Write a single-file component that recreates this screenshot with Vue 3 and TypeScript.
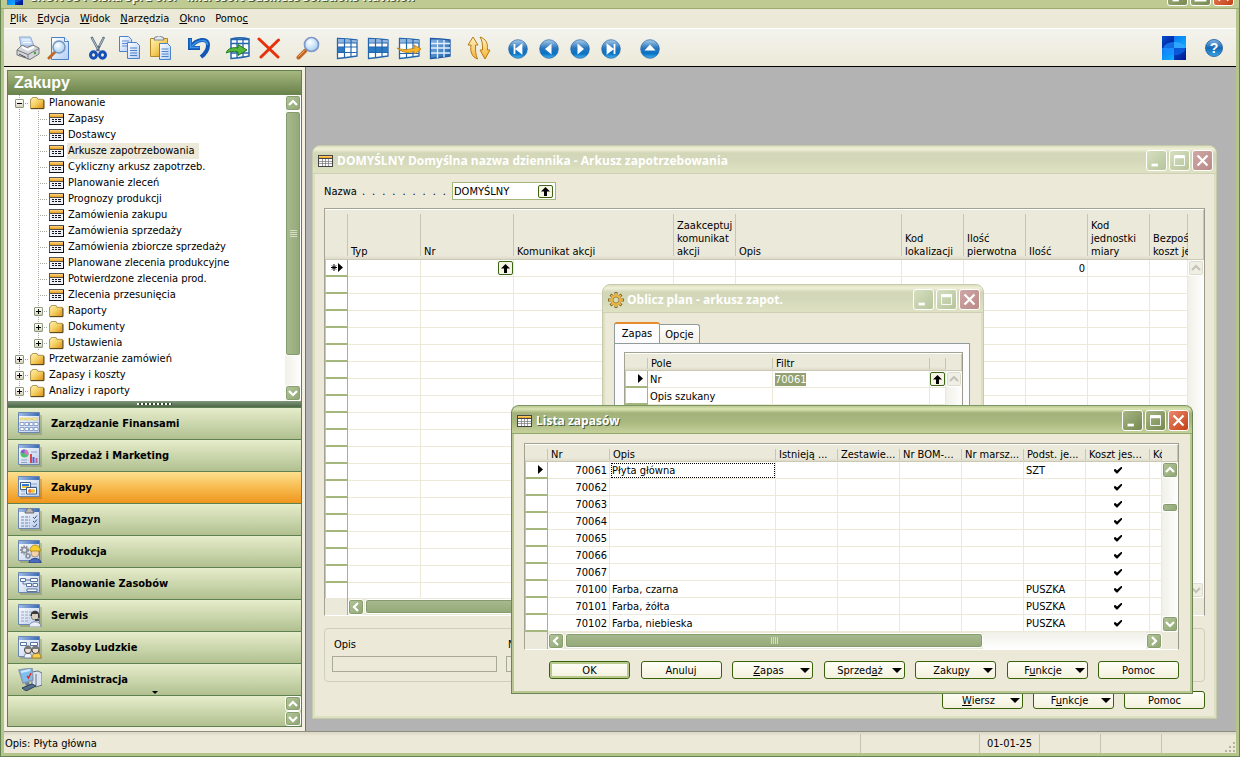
<script setup lang="ts">
interface TreeRow {
  level: 1 | 2
  label: string
  kind: 'folder' | 'list'
  state?: 'open' | 'closed'
  selected?: boolean
}

interface Item {
  nr: string
  name: string
  unit: string
}

const menus: string[] = ['&Plik', '&Edycja', '&Widok', '&Narzędzia', '&Okno', 'Pomo&c']

const toolGroups: { id: string; title: string }[][] = [
  [{ id: 'print', title: 'Drukuj' }, { id: 'preview', title: 'Podgląd' }],
  [{ id: 'cut', title: 'Wytnij' }, { id: 'copy', title: 'Kopiuj' }, { id: 'paste', title: 'Wklej' }],
  [{ id: 'undo', title: 'Cofnij' }],
  [{ id: 'insert', title: 'Wstaw' }, { id: 'delete', title: 'Usuń' }],
  [{ id: 'find', title: 'Znajdź' }],
  [{ id: 'grid1', title: 'Filtr pola' }, { id: 'grid2', title: 'Filtr tabeli' }, { id: 'grid3', title: 'Filtr przepływu' }, { id: 'grid4', title: 'Pokaż wszystko' }],
  [{ id: 'refresh', title: 'Odśwież' }],
  [{ id: 'first', title: 'Pierwszy' }, { id: 'prev', title: 'Poprzedni' }, { id: 'next', title: 'Następny' }, { id: 'last', title: 'Ostatni' }],
  [{ id: 'up', title: 'Lista' }],
]

const list = (label: string, selected = false): TreeRow => ({ level: 2, label, kind: 'list', selected })

const tree: TreeRow[] = [
  { level: 1, label: 'Planowanie', kind: 'folder', state: 'open' },
  list('Zapasy'),
  list('Dostawcy'),
  list('Arkusze zapotrzebowania', true),
  list('Cykliczny arkusz zapotrzeb.'),
  list('Planowanie zleceń'),
  list('Prognozy produkcji'),
  list('Zamówienia zakupu'),
  list('Zamówienia sprzedaży'),
  list('Zamówienia zbiorcze sprzedaży'),
  list('Planowane zlecenia produkcyjne'),
  list('Potwierdzone zlecenia prod.'),
  list('Zlecenia przesunięcia'),
  { level: 2, label: 'Raporty', kind: 'folder', state: 'closed' },
  { level: 2, label: 'Dokumenty', kind: 'folder', state: 'closed' },
  { level: 2, label: 'Ustawienia', kind: 'folder', state: 'closed' },
  { level: 1, label: 'Przetwarzanie zamówień', kind: 'folder', state: 'closed' },
  { level: 1, label: 'Zapasy i koszty', kind: 'folder', state: 'closed' },
  { level: 1, label: 'Analizy i raporty', kind: 'folder', state: 'closed' },
]

const modules: { id: string; label: string }[] = [
  { id: 'finance', label: 'Zarządzanie Finansami' },
  { id: 'sales', label: 'Sprzedaż i Marketing' },
  { id: 'purchase', label: 'Zakupy' },
  { id: 'warehouse', label: 'Magazyn' },
  { id: 'production', label: 'Produkcja' },
  { id: 'resources', label: 'Planowanie Zasobów' },
  { id: 'service', label: 'Serwis' },
  { id: 'hr', label: 'Zasoby Ludzkie' },
  { id: 'admin', label: 'Administracja' },
]
const activeModule = 'purchase'

const sheetColumns: { label: string; cls: string }[] = [
  { label: 'Typ', cls: 'w73' },
  { label: 'Nr', cls: 'w93' },
  { label: 'Komunikat akcji', cls: 'w160' },
  { label: 'Zaakceptuj\nkomunikat\nakcji', cls: 'w62' },
  { label: 'Opis', cls: 'w166' },
  { label: 'Kod\nlokalizacji', cls: 'w62' },
  { label: 'Ilość\npierwotna', cls: 'w62' },
  { label: 'Ilość', cls: 'w62' },
  { label: 'Kod\njednostki\nmiary', cls: 'w62' },
  { label: 'Bezpoś\nkoszt je', cls: 'rest' },
]
const sheetRows = 20

const itemColumns: { label: string; cls: string }[] = [
  { label: 'Nr', cls: 'w62' },
  { label: 'Opis', cls: 'w166' },
  { label: 'Istnieją ...', cls: 'w62' },
  { label: 'Zestawie...', cls: 'w62' },
  { label: 'Nr BOM-...', cls: 'w62' },
  { label: 'Nr marsz...', cls: 'w62' },
  { label: 'Podst. je...', cls: 'w62' },
  { label: 'Koszt jes...', cls: 'w64' },
  { label: 'Ko', cls: 'rest' },
]

const items: Item[] = [
  { nr: '70061', name: 'Płyta główna', unit: 'SZT' },
  { nr: '70062', name: '', unit: '' },
  { nr: '70063', name: '', unit: '' },
  { nr: '70064', name: '', unit: '' },
  { nr: '70065', name: '', unit: '' },
  { nr: '70066', name: '', unit: '' },
  { nr: '70067', name: '', unit: '' },
  { nr: '70100', name: 'Farba, czarna', unit: 'PUSZKA' },
  { nr: '70101', name: 'Farba, żółta', unit: 'PUSZKA' },
  { nr: '70102', name: 'Farba, niebieska', unit: 'PUSZKA' },
]

const itemActions: { label: string; menu?: boolean; primary?: boolean }[] = [
  { label: 'OK', primary: true },
  { label: 'Anuluj' },
  { label: '&Zapas', menu: true },
  { label: 'Sprzed&aż', menu: true },
  { label: 'Zaku&py', menu: true },
  { label: 'F&unkcje', menu: true },
  { label: 'Pomoc' },
]

const sheetActions: { label: string; menu?: boolean }[] = [
  { label: '&Wiersz', menu: true },
  { label: 'F&unkcje', menu: true },
  { label: 'Pomoc' },
]

/** Splits "F&unkcje" into text before, the accelerator key, and text after. */
function accel(label: string): [string, string, string] {
  const i = label.indexOf('&')
  return i < 0 ? [label, '', ''] : [label.slice(0, i), label[i + 1], label.slice(i + 2)]
}
</script>

<template>
  <svg class="defs" aria-hidden="true">
    <defs>
      <linearGradient id="gPage" x1="0" y1="0" x2="1" y2="1"><stop offset="0" stop-color="#fff" /><stop offset="1" stop-color="#b4cdf6" /></linearGradient>
      <linearGradient id="gFolder" x1="0" y1="0" x2="1" y2="1"><stop offset="0" stop-color="#fff3b8" /><stop offset=".5" stop-color="#f5cf60" /><stop offset="1" stop-color="#dd8a10" /></linearGradient>
      <linearGradient id="gBlue" x1="0" y1="0" x2="0" y2="1"><stop offset="0" stop-color="#a9cdea" /><stop offset=".45" stop-color="#2a76bd" /><stop offset=".75" stop-color="#0873c4" /><stop offset="1" stop-color="#4db4ee" /></linearGradient>
      <linearGradient id="gGrid" x1="0" y1="0" x2="1" y2="1"><stop offset="0" stop-color="#8db6e2" /><stop offset="1" stop-color="#1a62b0" /></linearGradient>
      <linearGradient id="gGold" x1="0" y1="0" x2="0" y2="1"><stop offset="0" stop-color="#fff6cc" /><stop offset="1" stop-color="#f5b02c" /></linearGradient>
      <linearGradient id="gBar" x1="0" y1="0" x2="0" y2="1"><stop offset="0" stop-color="#ffd98a" /><stop offset="1" stop-color="#ee9a10" /></linearGradient>
      <radialGradient id="gLens" cx=".4" cy=".35" r=".7"><stop offset="0" stop-color="#fff" /><stop offset="1" stop-color="#9ecbf2" /></radialGradient>
      <linearGradient id="gModTop" x1="0" y1="0" x2="1" y2="0"><stop offset="0" stop-color="#9dbbe6" /><stop offset="1" stop-color="#3f6cb4" /></linearGradient>
      <linearGradient id="gModPage" x1="0" y1="0" x2="1" y2="1"><stop offset="0" stop-color="#fff" /><stop offset="1" stop-color="#b9ccec" /></linearGradient>
      <linearGradient id="gNavy" x1="0" y1="0" x2="1" y2="1"><stop offset="0" stop-color="#0050d0" /><stop offset="1" stop-color="#00148c" /></linearGradient>
      <linearGradient id="gSky" x1="0" y1="0" x2="1" y2="1"><stop offset="0" stop-color="#0a78f0" /><stop offset="1" stop-color="#0cb0ff" /></linearGradient>
    </defs>

    <symbol id="t-print" viewBox="0 0 24 24">
      <path d="M3.500 1h11l3.500 9H5z" fill="#c4dcfa" stroke="#8fa9cc" /><path d="M6 4h8M7 6.500h8" stroke="#fff" />
      <path d="M1 14l5-5 5 2.500 6-2.500 6 3v6l-9 5.500L1 19z" fill="#d4d5d8" stroke="#777b82" />
      <path d="M1 14l11 4.500 11-6M12 18.500v5" fill="none" stroke="#777b82" /><path d="M6 11l6 3 6-3" fill="none" stroke="#fff" stroke-width="2" />
      <path d="M3 18l7 3.500" stroke="#444" /><path d="M18 17.500l2-1" stroke="#3aa53a" stroke-width="2" />
    </symbol>
    <symbol id="t-preview" viewBox="0 0 24 24">
      <path d="M4.500 1.500h13l4 4v18h-17z" fill="url(#gPage)" stroke="#4b82c8" /><path d="M17.500 1.500v4h4" fill="#fff" stroke="#4b82c8" />
      <path d="M8 16l-6 6" stroke="#c0682a" stroke-width="3" stroke-linecap="round" /><circle cx="12" cy="11" r="6" fill="url(#gLens)" stroke="#7695bb" stroke-width="1.500" />
    </symbol>
    <symbol id="t-cut" viewBox="0 0 24 24">
      <path d="M5.500 1l7.500 14M18 1l-7 14" stroke="#5a6b80" stroke-width="2.400" /><path d="M6 2l6 11M17.500 2l-4 8" stroke="#c9d5e2" stroke-width=".8" />
      <ellipse cx="7.500" cy="19" rx="3" ry="3.200" fill="none" stroke="#1450b8" stroke-width="3" /><ellipse cx="16.500" cy="19" rx="3" ry="3.200" fill="none" stroke="#1450b8" stroke-width="3" />
    </symbol>
    <symbol id="t-copy" viewBox="0 0 24 24">
      <path d="M2.500 .5h9l3 3v12h-12z" fill="url(#gPage)" stroke="#4b82c8" /><path d="M5 5h7M5 7.500h7M5 10h7" stroke="#5b90d8" />
      <path d="M10.500 6.500h9l3 3v13h-12z" fill="url(#gPage)" stroke="#4b82c8" /><path d="M13 12h7M13 14.500h7M13 17h7M13 19.500h7" stroke="#4b82c8" />
    </symbol>
    <symbol id="t-paste" viewBox="0 0 24 24">
      <path d="M2.500 2.500h17v18h-17z" fill="url(#gFolder)" stroke="#b28a28" /><path d="M6 4l1-3h2c0-1.500 4-1.500 4 0h2l1 3z" fill="#e7e9ee" stroke="#7c8794" />
      <path d="M11.500 7.500h8l3 3v13h-11z" fill="url(#gPage)" stroke="#4b82c8" /><path d="M13.500 13h7M13.500 15.500h7M13.500 18h7M13.500 20.500h7" stroke="#4b82c8" />
    </symbol>
    <symbol id="t-undo" viewBox="0 0 24 24">
      <path d="M3 2v10h10M4 11C9 3 21 1 21 9c0 5-3 9-7 12" fill="none" stroke="#1258b4" stroke-width="4" /><path d="M3.500 3v8.500h9M5 10C11 3 20 3 20.500 9" fill="none" stroke="#3d96ea" stroke-width="1.500" />
    </symbol>
    <symbol id="t-insert" viewBox="0 0 24 24">
      <path d="M5 3c6-1.500 12-1.500 18 0v17c-6 1.500-12 2-18 2.500z" fill="#fff" stroke="#2466ae" stroke-width="1.500" /><path d="M5 7.500h18M5 17h18M11 2v20M17 2v20M5 3.500h18" stroke="#2466ae" stroke-width="1.300" />
      <path d="M0 17c2-5 7-6 12-5V8.500l9 5.500-9 5.500V16c-5-1.500-9 0-12 1z" fill="#58b83c" stroke="#207a1c" />
    </symbol>
    <symbol id="t-delete" viewBox="0 0 24 24"><path d="M2 3l19 18M21.500 4L4 21" stroke="#e8310c" stroke-width="3" stroke-linecap="round" /></symbol>
    <symbol id="t-find" viewBox="0 0 24 24">
      <path d="M9.500 14.500L2.500 21.500" stroke="#c06626" stroke-width="4" stroke-linecap="round" /><path d="M8.500 14.500l-6 6" stroke="#f0b070" stroke-width="1" /><circle cx="15.500" cy="8.500" r="7" fill="url(#gLens)" stroke="#7e97c6" stroke-width="1.700" />
    </symbol>
    <symbol id="t-grid1" viewBox="0 0 24 24">
      <path d="M2.500 2.500c6 0 13 .5 19.500 1.500v16c-6 1-13 2-19.500 2.500z" fill="#fff" stroke="#2466ae" stroke-width="1.300" /><path d="M3 3l19 1.500V7L3 6.500z" fill="#8fb4dd" /><path d="M3 11h7v5.500H3z" fill="#2a7ac4" />
      <path d="M2 7h20M2 11h20M2 16.500h20M9.500 3v19M16 3v18" stroke="#2466ae" stroke-width="1.200" />
    </symbol>
    <symbol id="t-grid2" viewBox="0 0 24 24">
      <path d="M2.500 2.500c6 0 13 .5 19.500 1.500v16c-6 1-13 2-19.500 2.500z" fill="#fff" stroke="#2466ae" stroke-width="1.300" /><path d="M3 3l19 1.500V7L3 6.500z" fill="#8fb4dd" /><path d="M3 11h19v5.500H3z" fill="#2a7ac4" />
      <path d="M2 7h20M2 11h20M2 16.500h20M9.500 3v19M16 3v18" stroke="#2466ae" stroke-width="1.200" />
    </symbol>
    <symbol id="t-grid3" viewBox="0 0 24 24">
      <path d="M2.500 2.500c6 0 13 .5 19.500 1.500v16c-6 1-13 2-19.500 2.500z" fill="#fff" stroke="#2466ae" stroke-width="1.300" /><path d="M3 3l19 1.500V7L3 6.500z" fill="#8fb4dd" />
      <path d="M2 7h20M2 17.500h20M9.500 3v19M16 3v18" stroke="#2466ae" stroke-width="1.200" /><path d="M0 12c5 2 10 2 18 0l-1-3 7 4-6 5-1-2.500c-6 2-12 1-17-3.500z" fill="#f7b52c" stroke="#b97b10" stroke-width=".8" />
    </symbol>
    <symbol id="t-grid4" viewBox="0 0 24 24">
      <path d="M2.500 2.500c6 0 13 .5 19.500 1.500v16c-6 1-13 2-19.500 2.500z" fill="url(#gGrid)" stroke="#1d5aa5" stroke-width="1.300" /><path d="M3 7.500h19M3 12h19M3 17h19M9.500 4v18M16 4v17" stroke="#e4f0fc" stroke-width="1.300" />
    </symbol>
    <symbol id="t-refresh" viewBox="0 0 24 24">
      <path d="M1 9l5-8 5 8H8.500c0 6 0 9 2 14C5 21 3 16 4 9z" fill="url(#gGold)" stroke="#b97b10" /><path d="M23 14l-5 9-5-9h2.500c0-6 0-9-2.500-13 6 2 8 6 7.500 13z" fill="url(#gGold)" stroke="#b97b10" />
    </symbol>
    <symbol id="t-first" viewBox="0 0 24 24"><circle cx="12" cy="13" r="9.300" fill="url(#gBlue)" stroke="#2264a8" stroke-width=".7" /><path d="M8.500 8v10M15.500 9v8l-5-4z" fill="#fff" stroke="#fff" stroke-width="1.800" /></symbol>
    <symbol id="t-prev" viewBox="0 0 24 24"><circle cx="12" cy="13" r="9.300" fill="url(#gBlue)" stroke="#2264a8" stroke-width=".7" /><path d="M14.500 7.500v11L8 13z" fill="#fff" /></symbol>
    <symbol id="t-next" viewBox="0 0 24 24"><circle cx="12" cy="13" r="9.300" fill="url(#gBlue)" stroke="#2264a8" stroke-width=".7" /><path d="M9.500 7.500v11L16 13z" fill="#fff" /></symbol>
    <symbol id="t-last" viewBox="0 0 24 24"><circle cx="12" cy="13" r="9.300" fill="url(#gBlue)" stroke="#2264a8" stroke-width=".7" /><path d="M15.500 8v10M8.500 9v8l5-4z" fill="#fff" stroke="#fff" stroke-width="1.800" /></symbol>
    <symbol id="t-up" viewBox="0 0 24 24"><circle cx="12" cy="13" r="9.300" fill="url(#gBlue)" stroke="#2264a8" stroke-width=".7" /><path d="M6.500 14.500h11L12 8.500z" fill="#fff" /></symbol>
    <symbol id="t-logo" viewBox="0 0 24 24">
      <path d="M0 0h12v12H0z" fill="url(#gNavy)" /><path d="M12 0h12v12H12z" fill="url(#gSky)" /><path d="M0 12h12v12H0z" fill="url(#gSky)" /><path d="M12 12h12v12H12z" fill="url(#gNavy)" />
      <ellipse cx="12" cy="12.500" rx="11" ry="6.500" fill="#1a8cff" opacity=".7" /><path d="M12 6c7 0 11 3 11 6H12z" fill="#2ea6ff" /><path d="M12 12h11c0 4-5 7-11 7z" fill="#0a56d8" />
    </symbol>

    <symbol id="i-folder" viewBox="0 0 16 14"><path d="M.5 12.500v-10h1l1-2h5l1 2h6v10z" fill="url(#gFolder)" stroke="#a89048" /><path d="M1 12.500h14v-9" fill="none" stroke="#4a3a10" /></symbol>
    <symbol id="i-list" viewBox="0 0 15 12">
      <path d="M0 0h15v12H0z" fill="#55565a" /><path d="M0 11h15v1H0zM14 1h1v11h-1z" fill="#111" /><path d="M1 1h13v3H1z" fill="url(#gBar)" /><path d="M1 4h13v7H1z" fill="#eef1fa" />
      <path d="M1 4.500h13" stroke="#555" /><path d="M3 6.500h2M6 6.500h2M9 6.500h3M3 8.500h2M6 8.500h2M9 8.500h3" stroke="#111" />
    </symbol>
    <symbol id="i-table" viewBox="0 0 15 12">
      <path d="M0 0h15v12H0z" fill="#444" /><path d="M1 1h13v2H1z" fill="url(#gBar)" /><path d="M1 4h13v7H1z" fill="#f8f9fc" /><path d="M1 6.500h13M1 8.500h13M4.500 4v7M7.500 4v7M10.500 4v7" stroke="#777" stroke-width=".7" />
    </symbol>
    <symbol id="i-gear" viewBox="0 0 16 16">
      <path d="M8 0v16M0 8h16M2.500 2.500l11 11M13.500 2.500l-11 11" stroke="#8a6a20" stroke-width="3" /><path d="M8 1v14M1 8h14M3.300 3.300l9.400 9.400M12.700 3.300l-9.400 9.400" stroke="#f3cb62" stroke-width="1.500" /><circle cx="8" cy="8" r="4.200" fill="#d6d9b8" stroke="#f0b63c" stroke-width="2" /><circle cx="8" cy="8" r="3" fill="none" stroke="#8a6a20" stroke-width=".7" />
    </symbol>
    <symbol id="i-chev-up" viewBox="0 0 12 12"><path d="M2 8l4-4 4 4" fill="none" stroke="currentColor" stroke-width="2.200" /></symbol>
    <symbol id="i-chev-down" viewBox="0 0 12 12"><path d="M2 4l4 4 4-4" fill="none" stroke="currentColor" stroke-width="2.200" /></symbol>
    <symbol id="i-chev-left" viewBox="0 0 12 12"><path d="M8 2L4 6l4 4" fill="none" stroke="currentColor" stroke-width="2.200" /></symbol>
    <symbol id="i-chev-right" viewBox="0 0 12 12"><path d="M4 2l4 4-4 4" fill="none" stroke="currentColor" stroke-width="2.200" /></symbol>
    <symbol id="i-arrow" viewBox="0 0 9 9"><path d="M4.500 0L9 4.500H6V9H3V4.500H0z" fill="#000" /></symbol>
    <symbol id="i-check" viewBox="0 0 8 8"><path d="M0 3.500l1.500-.5L3 4.500l4-3.500h1v1.500L3.500 7.500H2.500L0 5z" fill="#000" /></symbol>

    <symbol id="m-base" viewBox="0 0 24 23">
      <path d="M2 3h22v20H2z" fill="#000" opacity=".15" /><path d="M.5.500h21v20H.5z" fill="url(#gModPage)" stroke="#6a86b4" /><path d="M1 1h20v3H1z" fill="url(#gModTop)" />
    </symbol>
    <symbol id="m-finance" viewBox="0 0 24 23">
      <use href="#m-base" /><path d="M2 6h5v2H2zM8 6h5v2H8zM14 6h6v2h-6z" fill="#f7ee9c" stroke="#c9b95a" stroke-width=".5" /><path d="M2 10.500h4v3H2zM2 15.500h4v3H2zM7 10.500h3.500v3H7zM11.500 10.500H15v3h-3.500zM16 10.500h4v3h-4zM7 15.500h3.500v3H7zM11.500 15.500H15v3h-3.500zM16 15.500h4v3h-4z" fill="#fff" stroke="#7f97c4" stroke-width=".9" />
    </symbol>
    <symbol id="m-sales" viewBox="0 0 24 23">
      <use href="#m-base" /><circle cx="6.500" cy="9.500" r="4" fill="#4fc46a" /><path d="M6.500 9.500V5.500a4 4 0 0 1 3.500 6z" fill="#e86fc8" /><path d="M6.500 9.500l-4-1a4 4 0 0 1 4-3z" fill="#8358e0" /><path d="M13 8h6M3 16h6M3 18.500h6" stroke="#8fa4c4" />
      <path d="M12 10h2v9h-2z" fill="#d24848" /><path d="M14.500 13h2v6h-2z" fill="#5e5ed0" /><path d="M17.500 14h2v5h-2z" fill="#b86a98" />
    </symbol>
    <symbol id="m-purchase" viewBox="0 0 24 23">
      <use href="#m-base" /><path d="M13 8h6M13 11h6M3 15h4M3 18h4" stroke="#8fa4c4" /><path d="M2.500 6.500h10v7h-10z" fill="#fff" stroke="#3c5c8c" /><path d="M4 8h7v2H4z" fill="#2f7ae0" /><path d="M4 10h7v2H4z" fill="#f2c83c" />
      <path d="M8.500 11.500h10v6.500h-10z" fill="#fff" stroke="#3c5c8c" /><circle cx="12" cy="15" r="2" fill="#f08030" /><circle cx="15" cy="15" r="2" fill="#f4c22e" />
    </symbol>
    <symbol id="m-warehouse" viewBox="0 0 24 23">
      <use href="#m-base" /><path d="M7 5c0-2 2-2 2-3.500C9-.5 14-.5 14 1.500 14 3 16 3 16 5z" fill="#b9b6b4" stroke="#6c6a6a" /><path d="M3 9h9M3 12h9M3 15h9M3 18h9" stroke="#6f86b0" stroke-dasharray="3 1" /><path d="M15 9l1.500 1.500L19 7.500M15 13l1.500 1.500L19 11.500M15 17.500l1.500 1.500 2.500-3" fill="none" stroke="#40587c" />
    </symbol>
    <symbol id="m-production" viewBox="0 0 24 23">
      <use href="#m-base" /><circle cx="6.500" cy="10" r="3.500" fill="none" stroke="#8a8f98" stroke-width="2.200" stroke-dasharray="1.500 1" /><circle cx="6.500" cy="10" r="2.500" fill="none" stroke="#8a8f98" stroke-width="1.500" /><circle cx="10" cy="16" r="2" fill="none" stroke="#8a8f98" stroke-width="1.600" />
      <path d="M11 23c0-6 12-6 12 0z" fill="#4b6bc0" stroke="#2b4488" /><circle cx="17" cy="13" r="4" fill="#f3d2ac" stroke="#8d6a48" stroke-width=".6" /><path d="M12 11c0-8 10-8 10.500 0z" fill="#f8cf2c" stroke="#a8820e" stroke-width=".8" />
    </symbol>
    <symbol id="m-resources" viewBox="0 0 24 23">
      <use href="#m-base" /><path d="M5 8v4h3M5 8h12" fill="none" stroke="#58749e" /><path d="M2.500 6.500h5v3h-5zM12.500 6.500h7v3h-7zM8.500 11.500h5v3h-5zM15 11.500h4.500v3H15zM9 17h10v2.500H9z" fill="#fff" stroke="#58749e" />
    </symbol>
    <symbol id="m-service" viewBox="0 0 24 23">
      <use href="#m-base" /><path d="M3 8h12M3 11h9M3 14h9M3 17h8" stroke="#98a4b4" stroke-dasharray="3 1" /><path d="M11 23c0-7 12-7 12 0z" fill="#e9eef6" stroke="#8090a8" /><circle cx="17" cy="12" r="4" fill="#d9cdbd" stroke="#555" stroke-width=".6" /><path d="M12.500 12c0-7 9-7 9 0v2h-1.500v-4h-6v2z" fill="#3b3b3b" /><path d="M17 16h4" stroke="#222" stroke-width="1.500" />
    </symbol>
    <symbol id="m-hr" viewBox="0 0 24 23">
      <use href="#m-base" /><path d="M2.500 6.500h6v3h-6zM12.500 6.500h7v3h-7z" fill="#fff" stroke="#58749e" /><path d="M6 22c0-7 8-7 8 0z" fill="#eef2f8" stroke="#7e8aa0" /><path d="M14 22c0-7 9-7 9 0z" fill="#f7cf50" stroke="#a8882c" />
      <circle cx="10" cy="14" r="3.500" fill="#e7ddd2" stroke="#333" /><circle cx="17.500" cy="14" r="3.500" fill="#f2dfcc" stroke="#444" /><path d="M6.500 13c1-5 6-5 7 0zM14 13c1-5 6-5 7 0z" fill="#777" />
    </symbol>
    <symbol id="m-admin" viewBox="0 0 24 23">
      <path d="M14 4l6-1 4 2v12l-6 2-4-2z" fill="#dbe3ee" stroke="#62738c" /><path d="M18 6v12" stroke="#62738c" /><path d="M1 2l13-2 1 12-10 3z" fill="#7cc0f0" stroke="#8b9ab2" stroke-width="1.500" /><path d="M3 4l9-2" stroke="#cfeaff" stroke-width="2" /><path d="M9 8l1.500 2L13 5" fill="none" stroke="#e03030" stroke-width="1.500" />
      <path d="M7 15l4-1 1 3-4 1z" fill="#6d7d94" /><path d="M4 20l10-4 4 2-10 5z" fill="#56708f" stroke="#2c4058" />
    </symbol>
  </svg>

  <div class="frame">
    <header class="app-title">
      <svg class="app-logo"><use href="#t-logo" /></svg>
      <h1 class="caption">CRONUS Polska Sp. z o.o. - Microsoft Business Solutions-Navision</h1>
      <div class="win-buttons">
        <button class="wb" type="button" aria-label="Minimalizuj"><svg viewBox="0 0 21 21"><path d="M5 14h7v3H5z" fill="#fff" /></svg></button>
        <button class="wb" type="button" aria-label="Maksymalizuj"><svg viewBox="0 0 21 21"><path d="M5 6h11v10H5z" fill="none" stroke="#fff" stroke-width="2" /></svg></button>
        <button class="wb close" type="button" aria-label="Zamknij"><svg viewBox="0 0 21 21"><path d="M5 5l11 11M16 5L5 16" stroke="#fff" stroke-width="2.500" /></svg></button>
      </div>
    </header>

    <nav class="menubar">
      <button v-for="m in menus" :key="m" type="button" class="menu">{{ accel(m)[0] }}<u>{{ accel(m)[1] }}</u>{{ accel(m)[2] }}</button>
    </nav>

    <div class="toolbar">
      <div v-for="(group, gi) in toolGroups" :key="gi" class="tool-group">
        <button v-for="t in group" :key="t.id" type="button" class="tool" :aria-label="t.title"><svg><use :href="'#t-' + t.id" /></svg></button>
      </div>
      <div class="tool-end">
        <svg class="tool-logo"><use href="#t-logo" /></svg>
        <button type="button" class="help" aria-label="Pomoc">?</button>
      </div>
    </div>

    <div class="main">
      <aside class="side">
        <div class="panel">
          <h2 class="panel-title">Zakupy</h2>
          <div class="tree-wrap">
            <ul class="tree">
              <li v-for="row in tree" :key="row.label" class="tree-row">
                <span v-if="row.level === 2" class="rail down"></span>
                <span class="rail down across"><button v-if="row.state" type="button" class="exp" :class="row.state" :aria-label="row.label"></button></span>
                <svg class="tree-icon" :class="row.kind"><use :href="'#i-' + row.kind" /></svg>
                <a href="#" class="tree-label" :class="{ selected: row.selected }">{{ row.label }}</a>
              </li>
            </ul>
            <div class="vscroll">
              <button type="button" class="sb" aria-label="W górę"><svg><use href="#i-chev-up" /></svg></button>
              <span class="thumb tree-thumb"><i class="grip"></i></span>
              <span class="track"></span>
              <button type="button" class="sb" aria-label="W dół"><svg><use href="#i-chev-down" /></svg></button>
            </div>
          </div>
          <div class="splitter"><span></span></div>
          <nav class="modules">
            <button v-for="m in modules" :key="m.id" type="button" class="module" :class="{ active: m.id === activeModule }">
              <svg><use :href="'#m-' + m.id" /></svg>{{ m.label }}
            </button>
          </nav>
          <div class="module-foot">
            <i class="more"></i>
            <div class="foot-scroll">
              <button type="button" class="sb" aria-label="W górę"><svg><use href="#i-chev-up" /></svg></button>
              <button type="button" class="sb" aria-label="W dół"><svg><use href="#i-chev-down" /></svg></button>
            </div>
          </div>
        </div>
      </aside>

      <main class="desktop">
        <section class="win inactive sheet">
          <header class="win-title">
            <svg class="win-icon"><use href="#i-table" /></svg>
            <h2 class="caption">DOMYŚLNY Domyślna nazwa dziennika - Arkusz zapotrzebowania</h2>
            <div class="win-buttons">
              <button class="wb" type="button" aria-label="Minimalizuj"><svg viewBox="0 0 21 21"><path d="M5 14h7v3H5z" fill="#fff" /></svg></button>
              <button class="wb" type="button" aria-label="Maksymalizuj"><svg viewBox="0 0 21 21"><path d="M5 5h11v11H5z" fill="none" stroke="#fff" /><path d="M5 5h11v3H5z" fill="#fff" /></svg></button>
              <button class="wb close" type="button" aria-label="Zamknij"><svg viewBox="0 0 21 21"><path d="M5 5l11 11M16 5L5 16" stroke="#fff" stroke-width="2.500" /></svg></button>
            </div>
          </header>
          <div class="win-body">
            <div class="name-row">
              <label for="journal">Nazwa</label>
              <span class="leader"><span v-for="n in 9" :key="n">.</span></span>
              <div class="lookup-box">
                <input id="journal" type="text" value="DOMYŚLNY" />
                <button type="button" class="lookup" aria-label="Wybierz"><svg><use href="#i-arrow" /></svg></button>
              </div>
            </div>

            <div class="grid-box fill">
              <div class="grid-main">
                <div class="grid-clip">
                  <table class="tall">
                    <colgroup><col class="w23" /><col v-for="c in sheetColumns" :key="c.label" :class="c.cls" /></colgroup>
                    <thead>
                      <tr><th></th><th v-for="c in sheetColumns" :key="c.label"><div>{{ c.label }}</div></th></tr>
                    </thead>
                    <tbody>
                      <tr v-for="r in sheetRows" :key="r">
                        <td class="mark"><svg v-if="r === 1" class="new-mark" viewBox="0 0 14 9"><path d="M4 1v7M1 4.500h6M2 2.500l4 4M6 2.500l-4 4" stroke="#000" /><path d="M8 0l5 4.500L8 9z" /></svg></td>
                        <td></td>
                        <td class="with-lookup"><button v-if="r === 1" type="button" class="lookup" aria-label="Wybierz"><svg><use href="#i-arrow" /></svg></button></td>
                        <td></td><td></td><td></td><td></td><td></td>
                        <td class="num">{{ r === 1 ? '0' : '' }}</td>
                        <td></td><td></td>
                      </tr>
                    </tbody>
                  </table>
                </div>
                <div class="vscroll off">
                  <span class="head-cap tall-cap"></span>
                  <button type="button" class="sb" disabled aria-label="W górę"><svg><use href="#i-chev-up" /></svg></button>
                  <span class="track"></span>
                  <button type="button" class="sb" disabled aria-label="W dół"><svg><use href="#i-chev-down" /></svg></button>
                </div>
              </div>
              <div class="hscroll">
                <span class="corner"></span>
                <button type="button" class="sb" aria-label="W lewo"><svg><use href="#i-chev-left" /></svg></button>
                <span class="thumb sheet-thumb"></span>
                <span class="track"></span>
                <button type="button" class="sb" aria-label="W prawo"><svg><use href="#i-chev-right" /></svg></button>
                <span class="end-cap"></span>
              </div>
            </div>

            <div class="group">
              <div class="field"><label for="f-opis">Opis</label><input id="f-opis" type="text" readonly /></div>
              <div class="field"><label for="f-nr">Nazwa</label><input id="f-nr" type="text" readonly /></div>
            </div>

            <div class="actions end">
              <button v-for="a in sheetActions" :key="a.label" type="button" class="btn" :class="{ drop: a.menu }">
                <span>{{ accel(a.label)[0] }}<u>{{ accel(a.label)[1] }}</u>{{ accel(a.label)[2] }}</span><i v-if="a.menu"></i>
              </button>
            </div>
          </div>
        </section>

        <section class="win inactive plan">
          <header class="win-title">
            <svg class="gear-icon"><use href="#i-gear" /></svg>
            <h2 class="caption">Oblicz plan - arkusz zapot.</h2>
            <div class="win-buttons">
              <button class="wb" type="button" aria-label="Minimalizuj"><svg viewBox="0 0 21 21"><path d="M5 14h7v3H5z" fill="#fff" /></svg></button>
              <button class="wb" type="button" aria-label="Maksymalizuj"><svg viewBox="0 0 21 21"><path d="M5 5h11v11H5z" fill="none" stroke="#fff" /><path d="M5 5h11v3H5z" fill="#fff" /></svg></button>
              <button class="wb close" type="button" aria-label="Zamknij"><svg viewBox="0 0 21 21"><path d="M5 5l11 11M16 5L5 16" stroke="#fff" stroke-width="2.500" /></svg></button>
            </div>
          </header>
          <div class="win-body">
            <div class="tabs">
              <button type="button" class="tab on">Zapas</button>
              <button type="button" class="tab">Opcje</button>
            </div>
            <div class="tab-page">
              <div class="grid-box">
                <div class="grid-main">
                  <div class="grid-clip">
                    <table>
                      <colgroup><col class="w23" /><col class="w125" /><col class="rest" /><col class="w16" /></colgroup>
                      <thead><tr><th></th><th><div>Pole</div></th><th><div>Filtr</div></th><th></th></tr></thead>
                      <tbody>
                        <tr>
                          <td class="mark"><svg class="row-mark" viewBox="0 0 5 9"><path d="M0 0l5 4.500L0 9z" /></svg></td>
                          <td>Nr</td>
                          <td><input class="filter" type="text" value="70061" aria-label="Filtr Nr" /></td>
                          <td class="with-lookup"><button type="button" class="lookup" aria-label="Wybierz"><svg><use href="#i-arrow" /></svg></button></td>
                        </tr>
                        <tr><td class="mark"></td><td>Opis szukany</td><td></td><td></td></tr>
                        <tr><td class="mark"></td><td></td><td></td><td></td></tr>
                      </tbody>
                    </table>
                  </div>
                  <div class="vscroll off">
                    <span class="head-cap"></span>
                    <button type="button" class="sb" disabled aria-label="W górę"><svg><use href="#i-chev-up" /></svg></button>
                    <span class="track"></span>
                  </div>
                </div>
              </div>
            </div>
          </div>
        </section>

        <section class="win items">
          <header class="win-title">
            <svg class="win-icon"><use href="#i-table" /></svg>
            <h2 class="caption">Lista zapasów</h2>
            <div class="win-buttons">
              <button class="wb" type="button" aria-label="Minimalizuj"><svg viewBox="0 0 21 21"><path d="M5 14h7v3H5z" fill="#fff" /></svg></button>
              <button class="wb" type="button" aria-label="Maksymalizuj"><svg viewBox="0 0 21 21"><path d="M5 5h11v11H5z" fill="none" stroke="#fff" /><path d="M5 5h11v3H5z" fill="#fff" /></svg></button>
              <button class="wb close" type="button" aria-label="Zamknij"><svg viewBox="0 0 21 21"><path d="M5 5l11 11M16 5L5 16" stroke="#fff" stroke-width="2.500" /></svg></button>
            </div>
          </header>
          <div class="win-body">
            <div class="grid-box">
              <div class="grid-main">
                <div class="grid-clip">
                  <table>
                    <colgroup><col class="w23" /><col v-for="c in itemColumns" :key="c.label" :class="c.cls" /></colgroup>
                    <thead>
                      <tr><th></th><th v-for="c in itemColumns" :key="c.label"><div>{{ c.label }}</div></th></tr>
                    </thead>
                    <tbody>
                      <tr v-for="(it, i) in items" :key="it.nr">
                        <td class="mark"><svg v-if="i === 0" class="row-mark" viewBox="0 0 5 9"><path d="M0 0l5 4.500L0 9z" /></svg></td>
                        <td class="num">{{ it.nr }}</td>
                        <td :class="{ focus: i === 0 }">{{ it.name }}</td>
                        <td></td><td></td><td></td><td></td>
                        <td>{{ it.unit }}</td>
                        <td class="tick"><svg role="img" aria-label="Tak"><use href="#i-check" /></svg></td>
                        <td></td>
                      </tr>
                    </tbody>
                  </table>
                </div>
                <div class="vscroll">
                  <span class="head-cap"></span>
                  <button type="button" class="sb" aria-label="W górę"><svg><use href="#i-chev-up" /></svg></button>
                  <span class="track lead"></span>
                  <span class="thumb tiny"></span>
                  <span class="track"></span>
                  <button type="button" class="sb" aria-label="W dół"><svg><use href="#i-chev-down" /></svg></button>
                </div>
              </div>
              <div class="hscroll">
                <span class="corner"></span>
                <button type="button" class="sb" aria-label="W lewo"><svg><use href="#i-chev-left" /></svg></button>
                <span class="thumb items-thumb"><i class="grip"></i></span>
                <span class="track"></span>
                <button type="button" class="sb" aria-label="W prawo"><svg><use href="#i-chev-right" /></svg></button>
                <span class="end-cap narrow"></span>
              </div>
            </div>
            <div class="actions spread">
              <button v-for="a in itemActions" :key="a.label" type="button" class="btn" :class="{ drop: a.menu, primary: a.primary }">
                <span>{{ accel(a.label)[0] }}<u>{{ accel(a.label)[1] }}</u>{{ accel(a.label)[2] }}</span><i v-if="a.menu"></i>
              </button>
            </div>
          </div>
        </section>
      </main>
    </div>

    <footer class="status">
      <span class="cell grow">Opis: Płyta główna</span>
      <span class="cell c119"></span>
      <span class="cell c60">01-01-25</span>
      <span class="cell c61"></span>
      <span class="cell c61"></span>
      <span class="cell c74"><svg class="resize" viewBox="0 0 12 12"><path d="M9 1h2v2H9zM5 5h2v2H5zM9 5h2v2H9zM1 9h2v2H1zM5 9h2v2H5zM9 9h2v2H9z" fill="#b5b29e" /></svg></span>
    </footer>
  </div>
</template>

<style>
body {
  margin: 0;
  background: #ece9d8;
}
</style>

<style scoped>
* { box-sizing: border-box; }
.defs { position: absolute; width: 0; height: 0; }
button, input { font: inherit; color: inherit; margin: 0; padding: 0; border-radius: 0; }
h1, h2, ul { margin: 0; padding: 0; }
svg { display: block; flex: none; }

.frame {
  display: flex;
  flex-direction: column;
  height: 100vh;
  overflow: hidden;
  border: 1px solid #64844f;
  border-top: 0;
  box-shadow: inset 3px 0 #b5c48a, inset -3px 0 #b5c48a, inset 0 -3px #b5c48a;
  padding: 0 3px 3px;
  background: #ece9d8;
  color: #000;
  font: 11px/13px "DejaVu Sans Condensed", "Noto Sans", sans-serif;
}

.caption {
  font: bold 12px/18px "Open Sans", "Noto Sans", sans-serif;
  color: #fff;
  white-space: nowrap;
  text-shadow: 1px 1px #4e5c33;
}

.app-title {
  display: flex;
  align-items: flex-end;
  flex: none;
  height: 9px;
  margin: 0 -3px;
  padding: 0 5px 2px 3px;
  overflow: hidden;
  background: #bfca92;
  border-bottom: 1px solid #9bab6f;
}
.app-logo { width: 16px; height: 16px; margin: 0 6px 1px 3px; }
.app-title .win-buttons { margin-left: auto; }

.win-buttons { display: flex; gap: 2px; }
.wb {
  width: 21px;
  height: 21px;
  border: 1px solid #fff;
  border-radius: 3px;
  background: linear-gradient(135deg, #a5b685, #77894f);
}
.wb svg { width: 19px; height: 19px; }
.wb.close { background: linear-gradient(135deg, #e98a6c, #c53f12); }

.menubar { display: flex; flex: none; height: 20px; padding: 0 0 0 1px; border-bottom: 1px solid #fff; }
.menu { padding: 0 5px; height: 18px; border: 0; background: none; }

.toolbar {
  display: flex;
  flex: none;
  align-items: center;
  height: 38px;
  padding-left: 8px;
  border-bottom: 1px solid #000;
  background: linear-gradient(#f3f3ee, #ece9d8);
}
.tool-group { display: flex; margin-right: 8px; }
.tool { display: grid; place-items: center; width: 31px; height: 30px; border: 0; background: none; }
.tool svg, .tool-logo { width: 24px; height: 24px; }
.tool-end { display: flex; align-items: center; gap: 19px; margin-left: auto; padding-right: 13px; }
.help {
  width: 18px;
  height: 18px;
  border: 1px solid #2a6aa8;
  border-radius: 50%;
  background: linear-gradient(#7db2e2, #1468b4 50%, #38a2e4);
  color: #fff;
  font: bold 14px/16px "Liberation Sans", sans-serif;
}

.main { display: flex; flex: 1; min-height: 0; }

.side { display: flex; flex: none; width: 302px; padding: 3px; border-right: 1px solid #5f8152; background: #f3f0e2; }
.panel { display: flex; flex-direction: column; flex: 1; min-width: 0; margin-bottom: 1px; border: 1px solid #5f8152; }
.panel-title {
  flex: none;
  height: 24px;
  padding-left: 6px;
  background: linear-gradient(#a6b87f, #68804a);
  color: #fff;
  font: bold 16px/24px "Liberation Sans", sans-serif;
}
.tree-wrap { display: flex; flex: 1; min-height: 0; background: #fff; }
.tree { flex: 1; padding-left: 2px; list-style: none; overflow: hidden; }
.tree-row { display: flex; align-items: center; height: 16px; }
.rail { display: grid; place-items: center; width: 19px; height: 16px; flex: none; background-repeat: no-repeat; }
.rail.down { background-image: repeating-linear-gradient(#a8a8a0 0 1px, transparent 1px 2px); background-size: 1px 100%; background-position: 9px 0; }
.rail.across {
  background-image: repeating-linear-gradient(#a8a8a0 0 1px, transparent 1px 2px), repeating-linear-gradient(90deg, #a8a8a0 0 1px, transparent 1px 2px);
  background-size: 1px 100%, 10px 1px;
  background-position: 9px 0, 9px 8px;
}
.exp {
  width: 9px;
  height: 9px;
  border: 1px solid #8a9a78;
  border-radius: 1px;
  background: linear-gradient(#000, #000) center / 5px 1px no-repeat, linear-gradient(#fff, #d6d2c0);
}
.exp.closed { background: linear-gradient(#000, #000) center / 5px 1px no-repeat, linear-gradient(#000, #000) center / 1px 5px no-repeat, linear-gradient(#fff, #d6d2c0); }
.tree-icon { width: 15px; margin: 0 3px 0 1px; }
.tree-icon.list { height: 12px; }
.tree-icon.folder { height: 13px; }
.tree-label { padding: 0 4px 1px 1px; line-height: 15px; color: #000; text-decoration: none; white-space: nowrap; }
.tree-label.selected { background: #ece9d8; }

.vscroll { display: flex; flex-direction: column; flex: none; width: 16px; background: #f6f5f0; }
.track { flex: 1; background: linear-gradient(90deg, #f1f0e8, #fefefe); }
.hscroll .track { background: linear-gradient(#f1f0e8, #fefefe); }
.sb {
  display: grid;
  place-items: center;
  flex: none;
  width: 16px;
  height: 16px;
  border: 1px solid #fff;
  border-radius: 3px;
  background: linear-gradient(135deg, #b4c69a, #8ea472);
  box-shadow: inset 0 0 0 1px #8aa070;
  color: #fff;
}
.sb svg { width: 12px; height: 12px; }
.sb:disabled { background: #f0efe6; box-shadow: inset 0 0 0 1px #dddbcd; color: #c5c3b5; }
.thumb {
  display: grid;
  place-items: center;
  border: 1px solid #fff;
  border-radius: 3px;
  background: linear-gradient(90deg, #a8ba90, #93a878);
  box-shadow: inset 0 0 0 1px #859d6e;
}
.grip { width: 7px; height: 7px; background: repeating-linear-gradient(#d5e0c2 0 1px, transparent 1px 2px); }
.tree-thumb { flex: none; height: 245px; }

.splitter { display: grid; place-items: center; flex: none; height: 7px; background: linear-gradient(#81977a, #4d6648); border-bottom: 1px solid #5f8152; }
.splitter span { width: 35px; height: 2px; background: repeating-linear-gradient(90deg, #fff 0 2px, #2f4428 2px 4px); }
.modules { display: flex; flex-direction: column; flex: none; }
.module {
  display: flex;
  align-items: center;
  gap: 9px;
  height: 32px;
  padding: 0 0 0 10px;
  border: 0;
  border-bottom: 1px solid #5f8152;
  background: linear-gradient(#e6edcb, #b1c090);
  font-weight: bold;
  text-align: left;
}
.module.active { background: linear-gradient(#fde08e, #f8bb50 50%, #ef961c); }
.module svg { width: 24px; height: 23px; }
.module-foot { display: flex; justify-content: flex-end; position: relative; flex: none; height: 30px; background: linear-gradient(#e6edcb, #b1c090); }
.foot-scroll { display: flex; flex-direction: column; width: 16px; }
.foot-scroll .sb { height: 15px; }
.more { position: absolute; left: 50%; top: -5px; margin-left: -3px; border: 3px solid transparent; border-top-color: #000; border-bottom: 0; }

.desktop { position: relative; flex: 1; min-width: 0; overflow: hidden; background: #b3b3b3; }
.win {
  position: absolute;
  display: flex;
  flex-direction: column;
  border: 1px solid #6a8658;
  border-top-color: #7c9562;
  border-radius: 8px 8px 0 0;
  background: #b9c78f;
  padding: 0 2px 2px;
}
.win.inactive { border-color: #c6cbac; background: #dde0c0; }
.sheet { left: 6px; right: 19px; top: 78px; bottom: 12px; }
.plan { left: 296px; top: 217px; width: 382px; }
.items { left: 205px; top: 338px; width: 682px; }

.win-title {
  display: flex;
  align-items: center;
  flex: none;
  height: 28px;
  margin: 0 -2px;
  padding: 2px 3px 0 5px;
  border-bottom: 1px solid #92a76a;
  border-radius: 7px 7px 0 0;
  background: linear-gradient(#b9c88f, #dbe4b4 3px, #a3b27a 7px, #a9b87f 16px, #c3cf98 26px);
}
.inactive .win-title { border-color: #cdd0b4; background: linear-gradient(#dcdfbd, #f0f0d8 3px, #d3d7b8 7px, #d4d8ba 14px, #dfe2c2); }
.win-title .win-buttons { margin-left: auto; }
.win-icon { width: 15px; height: 12px; margin-right: 4px; }
.gear-icon { width: 16px; height: 16px; margin-right: 3px; }
.inactive .caption { text-shadow: none; }
.inactive .wb { background: linear-gradient(135deg, #d6dfc0, #b6c49a); }
.inactive .wb.close { background: linear-gradient(135deg, #cfa6a6, #b98a88); }

.win-body { display: flex; flex-direction: column; flex: 1; min-height: 0; padding: 9px 10px 9px 9px; background: #ece9d8; }
.sheet .win-body { padding: 8px 9px 7px; }
.items .win-body { padding: 9px 11px 12px 10px; }

.name-row { display: flex; align-items: center; flex: none; height: 18px; margin-bottom: 8px; }
.leader { display: flex; justify-content: space-between; width: 84px; margin-right: 6px; }
.name-row label { width: 38px; }
.lookup-box { display: flex; align-items: center; width: 104px; height: 18px; padding-right: 2px; border: 1px solid #a5b67c; background: #fff; }
.lookup-box input { flex: 1; min-width: 0; height: 14px; padding-left: 1px; border: 0; background: none; outline: 0; }
.lookup {
  display: grid;
  place-items: center;
  flex: none;
  width: 15px;
  height: 13px;
  border: 1px solid #3d6414;
  border-radius: 2px;
  background: #f6f4e6;
}
.lookup svg { width: 9px; height: 9px; }

.grid-box { display: flex; flex-direction: column; border: 1px solid #a3a393; border-right-color: #9a9a8c; border-bottom-color: #fff; background: #ebe9da; }
.grid-box.fill { flex: 1; min-height: 0; }
.grid-main { display: flex; flex: 1; min-height: 0; border-top: 1px solid #fff; }
.grid-clip { flex: 1; min-width: 0; overflow: hidden; }
table { width: 100%; table-layout: fixed; border-collapse: separate; border-spacing: 0; }
.w16 { width: 16px; }
.w23 { width: 23px; }
.w62 { width: 62px; }
.w64 { width: 64px; }
.w73 { width: 73px; }
.w93 { width: 93px; }
.w125 { width: 125px; }
.w160 { width: 160px; }
.w166 { width: 166px; }
th {
  height: 17px;
  padding: 0;
  border-bottom: 1px solid #cbc8b4;
  background: linear-gradient(#c8c5b2, #c8c5b2) right 4px / 1px 11px no-repeat, linear-gradient(transparent 80%, #dedbca) #ebe9da;
  font-weight: normal;
  text-align: left;
  vertical-align: bottom;
  overflow: hidden;
}
th div { padding: 0 0 0 3px; overflow: hidden; white-space: pre; }
.tall th { height: 50px; background: linear-gradient(#c8c5b2, #c8c5b2) right 4px / 1px 42px no-repeat, linear-gradient(transparent 92%, #dedbca) #ebe9da; }
.tall th div { padding-bottom: 1px; }
td {
  height: 17px;
  padding: 0 2px;
  border-right: 1px solid #ece9d8;
  border-bottom: 1px solid #ece9d8;
  background: #fff;
  line-height: 15px;
  white-space: nowrap;
  overflow: hidden;
}
td.mark { border-left: 1px solid #c3cda6; border-right-color: #a5b67c; border-bottom: 2px solid #a5b67c; }
.new-mark { width: 14px; height: 9px; margin: 0 auto; }
.row-mark { width: 5px; height: 9px; margin-left: 10px; }
td.num { text-align: right; }
td.tick svg { width: 8px; height: 8px; margin: 0 auto; }
td.with-lookup { padding: 0; }
td.with-lookup .lookup { margin-left: auto; height: 14px; }
td.focus { outline: 1px dotted #000; outline-offset: -2px; }
.filter { display: block; width: 31px; height: 13px; border: 0; background: #93a070; color: #fff; }

.head-cap { flex: none; height: 17px; border-bottom: 1px solid #cbc8b4; border-right: 1px solid #c8c5b2; background: #ebe9da; }
.head-cap.tall-cap { height: 50px; }
.hscroll { display: flex; flex: none; height: 17px; }
.hscroll .sb { align-self: center; }
.hscroll .thumb { flex: none; margin: 1px 0 1px 1px; background: linear-gradient(#a8ba90, #93a878); }
.corner { flex: none; width: 23px; border-right: 1px solid #a5b67c; }
.sheet-thumb { width: 560px; }
.items-thumb { width: 418px; }
.hscroll .grip { background: repeating-linear-gradient(90deg, #d5e0c2 0 1px, transparent 1px 2px); }
.end-cap { flex: none; width: 16px; }
.track.lead { flex: none; height: 25px; }
.tiny { flex: none; height: 9px; }

.group { display: flex; gap: 9px; flex: none; height: 54px; margin-top: 12px; padding: 9px 7px; border: 1px solid #d0cfbc; border-radius: 4px; overflow: hidden; }
.field { display: flex; flex-direction: column; gap: 5px; flex: none; width: 165px; }
.field label { padding-left: 2px; }
.field input { width: 100%; height: 16px; border: 1px solid #a9a998; background: #ece9d8; }

.actions { display: flex; flex: none; margin-top: 11px; }
.actions.end { justify-content: flex-end; gap: 10px; margin-top: 9px; }
.actions.spread { justify-content: space-between; padding-left: 25px; }
.btn {
  display: flex;
  align-items: center;
  justify-content: center;
  width: 81px;
  height: 18px;
  border: 1px solid #37620a;
  border-radius: 3px;
  background: linear-gradient(#fffff8, #f3f0dc);
}
.btn.primary { box-shadow: inset 0 0 0 2px #b9c98e; }
.btn.drop { padding: 0 2px 0 4px; }
.btn.drop span { flex: 1; }
.btn i { border: 5px solid transparent; border-top-color: #000; border-bottom: 0; }

.tabs { display: flex; align-items: flex-end; height: 21px; flex: none; }
.tab { width: 40px; height: 19px; border: 1px solid #919b9c; border-bottom: 0; border-left: 0; border-radius: 0 3px 0 0; background: linear-gradient(#fff, #f2f0e2); }
.tab.on { width: 46px; height: 21px; border-left: 1px solid #919b9c; border-top: 2px solid #e68b2c; border-radius: 3px 3px 0 0; background: #fcfcfe; }
.tab-page { padding: 8px 6px 8px 9px; margin-right: 1px; border: 1px solid #919b9c; background: #fcfcfe; }

.status { display: flex; flex: none; height: 22px; border-top: 1px solid #8f8d80; background: linear-gradient(#d9d6c6, #ece9d8 4px); }
.cell { display: flex; align-items: center; justify-content: center; border-right: 1px solid #c5c2b0; margin: 2px 0 0; }
.cell.grow { flex: 1; justify-content: flex-start; padding-left: 1px; }
.c119 { width: 119px; }
.c60 { width: 60px; }
.c61 { width: 61px; }
.c74 { width: 74px; justify-content: flex-end; align-items: flex-end; border-right: 0; }
.resize { width: 12px; height: 12px; }
</style>
